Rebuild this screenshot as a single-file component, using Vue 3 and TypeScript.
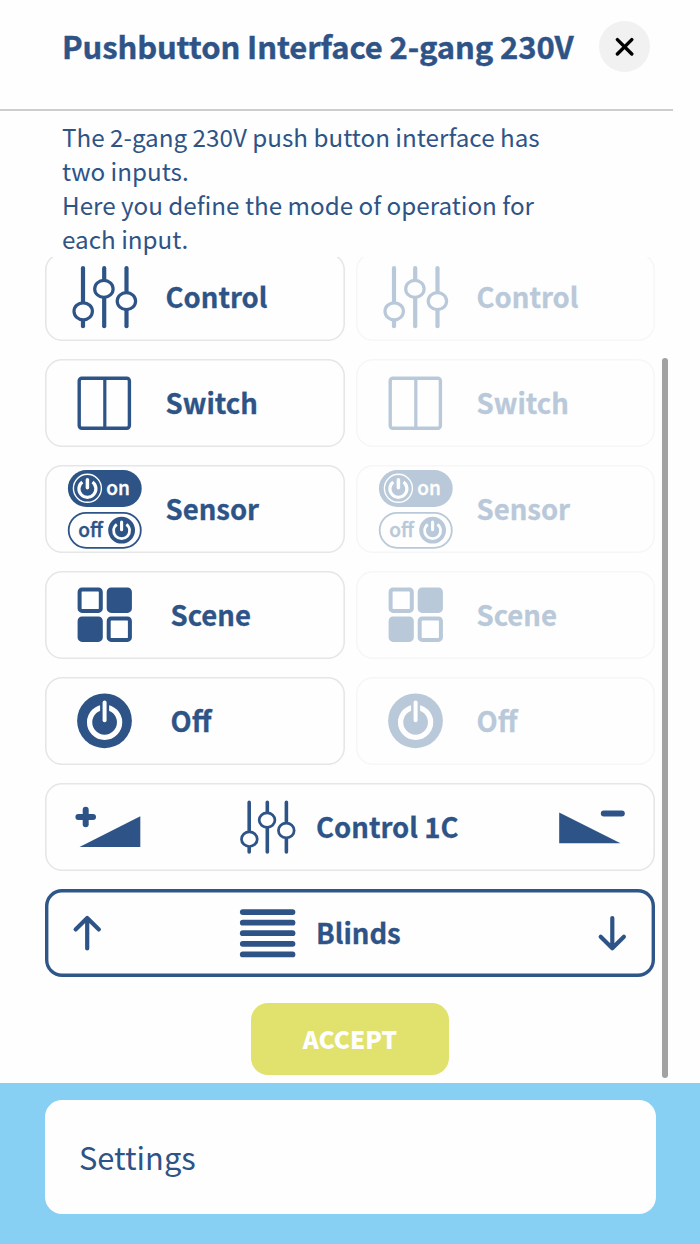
<script setup lang="ts">
import { defineComponent, h } from 'vue'
import type { VNode } from 'vue'

type IconName =
  | 'control' | 'switch' | 'sensor' | 'scene' | 'off'
  | 'rampUp' | 'rampDown' | 'blinds' | 'arrowUp' | 'arrowDown'

interface Mode {
  icon: IconName
  label: string
  indent?: boolean
}

const modes: Mode[] = [
  { icon: 'control', label: 'Control' },
  { icon: 'switch', label: 'Switch' },
  { icon: 'sensor', label: 'Sensor' },
  { icon: 'scene', label: 'Scene', indent: true },
  { icon: 'off', label: 'Off', indent: true },
]

const paper = '#fefefe'
const ink = 'currentColor'

const line = (x1: number, y1: number, x2: number, y2: number, w: number, stroke = ink): VNode =>
  h('line', { x1, y1, x2, y2, stroke, 'stroke-width': w, 'stroke-linecap': 'round' })

const box = (x: number, y: number, width: number, height: number, rx: number, w: number, fill = 'none'): VNode =>
  h('rect', { x, y, width, height, rx, fill, stroke: ink, 'stroke-width': w })

const word = (x: number, y: number, length: number, fill: string, text: string): VNode =>
  h('text', {
    x, y, fill, stroke: fill, 'stroke-width': 0.4, textLength: length, lengthAdjust: 'spacingAndGlyphs',
    'font-size': 20, 'font-weight': 500,
  }, text)

const power = (cx: number, cy: number, color: string, r: number, w: number): VNode[] => [
  h('path', {
    d: `M${cx - r * 0.6} ${cy - r * 0.8}A${r} ${r} 0 1 0 ${cx + r * 0.6} ${cy - r * 0.8}`,
    fill: 'none', stroke: color, 'stroke-width': w, 'stroke-linecap': 'butt',
  }),
  line(cx, cy - r - 0.6, cx, cy - 1, w + 0.3, color),
]

// All shapes are drawn around the origin, which is the centre of the icon slot.
const shapes: Record<IconName, () => VNode[]> = {
  control: () => [
    line(-21.5, -29, -21.5, 29, 4.2),
    line(-0.3, -29, -0.3, 29, 4.2),
    line(22, -29, 22, 29, 4.2),
    ...[[-21.3, 14.1], [-0.6, -8.3], [21.9, 3.9]].map(([cx, cy]) =>
      h('ellipse', { cx, cy, rx: 9.2, ry: 8.5, fill: paper, stroke: ink, 'stroke-width': 3.2 })),
  ],
  switch: () => [
    box(-25.3, -25, 50.2, 50, 2.6, 3.4),
    line(0.3, -24, 0.3, 24, 3.2),
  ],
  sensor: () => [
    h('rect', { x: -36.6, y: -39.2, width: 73.8, height: 36.9, rx: 18.4, fill: ink }),
    h('circle', { cx: -17.1, cy: -20.9, r: 14, fill: 'none', stroke: paper, 'stroke-width': 1.4 }),
    ...power(-17.1, -20.4, paper, 8.5, 3.2),
    word(1.8, -14.4, 23.6, paper, 'on'),
    box(-35.8, 3.6, 72.1, 35, 17.5, 1.8),
    h('circle', { cx: 17.1, cy: 21, r: 13.4, fill: ink }),
    ...power(17.1, 21.5, paper, 8, 2.8),
    word(-26.2, 28.2, 24.6, ink, 'off'),
  ],
  scene: () => [
    box(-24.9, -25.7, 21.2, 21.4, 2.4, 4),
    box(4.2, -25.7, 21.2, 21.4, 2.4, 4, ink),
    box(-24.9, 3.3, 21.2, 21.4, 2.4, 4, ink),
    box(4.2, 3.3, 21.2, 21.4, 2.4, 4),
  ],
  off: () => [
    h('circle', { cx: 0, cy: -0.4, r: 27.4, fill: ink }),
    h('circle', { cx: 0.1, cy: 1.1, r: 15, fill: 'none', stroke: paper, 'stroke-width': 5.3 }),
    h('rect', { x: -4.4, y: -18, width: 9, height: 12, fill: ink }),
    line(0.1, -18.8, 0.1, -0.9, 4, paper),
  ],
  rampUp: () => [
    line(-26.1, -10.2, -11.5, -10.2, 6),
    line(-18.8, -17.4, -18.8, -3, 6),
    h('path', { d: 'M-25 19.8L35.8 -11V19.8Z', fill: ink }),
  ],
  rampDown: () => [
    h('path', { d: 'M-36.3 -14.6L25 16.1H-36.3Z', fill: ink }),
    line(8.3, -13.6, 26.3, -13.6, 6),
  ],
  blinds: () => [-21.1, -10.5, 0, 10.6, 21.2].map((y) => line(-24.7, y, 25, y, 5.8)),
  arrowUp: () => [
    h('path', {
      d: 'M-17.3 15.2V-15M-28.9 -3.8L-17.3 -15.2L-5.6 -3.8',
      fill: 'none', stroke: ink, 'stroke-width': 4.2, 'stroke-linecap': 'round', 'stroke-linejoin': 'round',
    }),
  ],
  arrowDown: () => [
    h('path', {
      d: 'M16.8 -15.2V15M5.2 3.6L16.8 15L28.4 3.6',
      fill: 'none', stroke: ink, 'stroke-width': 4.2, 'stroke-linecap': 'round', 'stroke-linejoin': 'round',
    }),
  ],
}

const Glyph = defineComponent({
  props: { name: { type: String, required: true } },
  setup(props) {
    return () => h('svg', { viewBox: '-42.5 -42.2 86 84', 'aria-hidden': 'true' }, shapes[props.name as IconName]())
  },
})
</script>

<template>
  <main class="screen">
    <header class="header">
      <h1 class="title">Pushbutton Interface 2-gang 230V</h1>
      <button class="close" aria-label="Close">
        <svg width="20" height="20" viewBox="0 0 20 20">
          <path d="M2.4 2.6L16.8 17M16.8 2.6L2.4 17" fill="none" stroke="#000" stroke-width="3.4" stroke-linecap="round" />
        </svg>
      </button>
    </header>

    <p class="intro">
      The 2-gang 230V push button interface has<br>two inputs.<br>
      Here you define the mode of operation for<br>each input.
    </p>

    <section class="scroller">
      <div class="options">
        <template v-for="mode in modes" :key="mode.label">
          <button class="card" :class="{ indent: mode.indent }">
            <Glyph class="icon" :name="mode.icon" />
            <span class="label">{{ mode.label }}</span>
          </button>
          <button class="card disabled">
            <Glyph class="icon" :name="mode.icon" />
            <span class="label">{{ mode.label }}</span>
          </button>
        </template>
        <button class="card wide">
          <Glyph class="icon" name="rampUp" />
          <Glyph class="icon middle small" name="control" />
          <span class="label">Control 1C</span>
          <Glyph class="icon last" name="rampDown" />
        </button>
        <button class="card wide selected">
          <Glyph class="icon" name="arrowUp" />
          <Glyph class="icon middle" name="blinds" />
          <span class="label">Blinds</span>
          <Glyph class="icon last" name="arrowDown" />
        </button>
      </div>
      <button class="accept"><span>ACCEPT</span></button>
      <div class="scrollbar"></div>
    </section>

    <footer class="footer">
      <div class="settings"><span>Settings</span></div>
    </footer>
  </main>
</template>

<style>
body {
  background: #fefefe;
}
</style>

<style scoped>
.screen {
  box-sizing: border-box;
  width: 700px;
  height: 1244px;
  display: flex;
  flex-direction: column;
  overflow: hidden;
  background: #fefefe;
  color: #2e5487;
  font-family: "Noto Sans CJK SC", "Noto Sans", sans-serif;
}

button {
  border: 0;
  margin: 0;
  padding: 0;
  font: inherit;
  color: inherit;
  background: none;
}

.header {
  box-sizing: border-box;
  flex: none;
  width: 673px;
  height: 111px;
  padding: 21px 23px 0 62px;
  display: flex;
  justify-content: space-between;
  align-items: flex-start;
  border-bottom: 2px solid #cdcdcd;
}

.title {
  margin: 0;
  font-size: 31px;
  font-weight: 700;
  line-height: 50px;
  letter-spacing: -0.12px;
  white-space: nowrap;
  -webkit-text-stroke: 0.4px currentColor;
}

.close {
  width: 51px;
  height: 51px;
  border-radius: 50%;
  background: #f1f1f1;
  display: flex;
  align-items: center;
  justify-content: center;
}

.intro {
  flex: none;
  box-sizing: border-box;
  height: 146px;
  margin: 0;
  padding: 9px 0 0 62px;
  font-size: 24.22px;
  line-height: 34px;
  white-space: nowrap;
}

.scroller {
  flex: none;
  position: relative;
  height: 826px;
  overflow: hidden;
}

.options {
  display: grid;
  grid-template-columns: 300px 299px;
  grid-auto-rows: 88px;
  gap: 18px 11px;
  margin: -4px 45px 0;
}

.card {
  display: flex;
  align-items: center;
  padding: 0 17px;
  border-radius: 17px;
  box-shadow: inset 0 0 0 1.6px #e6e6e6;
}

.card.disabled {
  color: #b9c9d9;
  box-shadow: inset 0 0 0 1.5px #f6f6f6;
}

.card.wide {
  grid-column: 1 / -1;
}

.card.selected {
  box-shadow: inset 0 0 0 3.4px #2f5689;
}

.icon {
  flex: none;
  width: 86px;
  height: 84px;
  overflow: visible;
}

.icon.middle {
  margin-left: 77px;
}

.icon.small {
  transform: scale(0.855);
}

.icon.last {
  margin-left: auto;
  margin-right: -1px;
}

.label {
  margin-left: 17.5px;
  padding-bottom: 2px;
  font-size: 27.5px;
  font-weight: 700;
  line-height: 40px;
  white-space: nowrap;
  -webkit-text-stroke: 0.3px currentColor;
}

.indent .label {
  margin-left: 22.5px;
}

.wide .label {
  margin-left: 5px;
}

.accept {
  display: flex;
  align-items: center;
  justify-content: center;
  width: 198px;
  height: 72px;
  margin: 26px auto 0;
  border-radius: 17px;
  background: #e1e26e;
  color: #fefefe;
  font-size: 24.3px;
  font-weight: 900;
}

.accept span {
  padding-bottom: 1px;
}

.scrollbar {
  position: absolute;
  top: 101px;
  right: 32px;
  width: 6px;
  height: 720px;
  border-radius: 3px;
  background: #a2a2a2;
}

.footer {
  flex: 1;
  padding: 17px 44.5px 0;
  background: #87d0f4;
}

.settings {
  box-sizing: border-box;
  height: 114px;
  padding: 0 0 2px 34.5px;
  display: flex;
  align-items: center;
  border-radius: 17px;
  background: #fefefe;
  font-size: 30.8px;
}
</style>
